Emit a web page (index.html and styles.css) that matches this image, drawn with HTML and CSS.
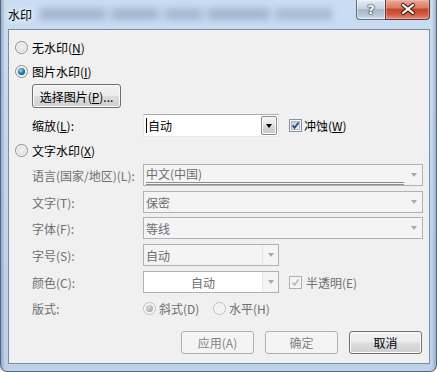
FILE: index.html
```html
<!DOCTYPE html>
<html lang="zh-CN">
<head>
<meta charset="utf-8">
<title>水印</title>
<link rel="stylesheet" href="styles.css">
</head>
<body>
<div class="window">
  <div class="titlebar">
    <span class="title">水印</span>
    <div class="ghost"></div>
    <div class="caption">
      <div class="cap-help">?</div>
      <div class="cap-close">
        <svg width="44" height="19" viewBox="0 0 44 19">
          <path d="M17 5 L27 13 M27 5 L17 13" stroke="#4a2019" stroke-width="4.2" stroke-linecap="round" fill="none"/>
          <path d="M17 5 L27 13 M27 5 L17 13" stroke="#ffffff" stroke-width="2.2" stroke-linecap="round" fill="none"/>
        </svg>
      </div>
    </div>
  </div>
  <div class="client">
    <div class="row opt r1"><span class="radio"></span><span class="txt">无水印(<u>N</u>)</span></div>
    <div class="row opt r2"><span class="radio on"></span><span class="txt">图片水印(<u>I</u>)</span></div>
    <div class="row r3"><div class="btn pick">选择图片(<u>P</u>)...</div></div>
    <div class="row field r4">
      <span class="lbl">缩放(<u>L</u>):</span>
      <div class="combo small edit">
        <span class="val"><i class="caret"></i>自动</span>
        <span class="dd"><span class="ddbtn"><i class="tri"></i></span></span>
      </div>
      <span class="chk">
        <svg width="13" height="13" viewBox="0 0 13 13">
          <defs><linearGradient id="cg1" x1="0" y1="0" x2="1" y2="1"><stop offset="0" stop-color="#b9c8dc"/><stop offset="1" stop-color="#f2f6fb"/></linearGradient></defs>
          <rect x="0.5" y="0.5" width="12" height="12" fill="#f6f6f6" stroke="#8e8f8f"/>
          <rect x="2.5" y="2.5" width="8" height="8" fill="url(#cg1)" stroke="#a9b8cc"/>
          <path d="M3.6 6.4 L5.6 8.8 L9.6 3.4" fill="none" stroke="#2f4482" stroke-width="1.7"/>
        </svg>
      </span>
      <span class="chktxt">冲蚀(<u>W</u>)</span>
    </div>
    <div class="row opt r5"><span class="radio"></span><span class="txt">文字水印(<u>X</u>)</span></div>
    <div class="row field r6">
      <span class="lbl dis">语言(国家/地区)(L):</span>
      <div class="combo wide dim">
        <span class="val"><span class="under">中文(中国)</span></span>
        <span class="dd"><i class="tri g"></i></span>
      </div>
    </div>
    <div class="row field r7">
      <span class="lbl dis">文字(T):</span>
      <div class="combo wide dim">
        <span class="val">保密</span>
        <span class="dd"><i class="tri g"></i></span>
      </div>
    </div>
    <div class="row field r8">
      <span class="lbl dis">字体(F):</span>
      <div class="combo wide dim">
        <span class="val">等线</span>
        <span class="dd"><i class="tri g"></i></span>
      </div>
    </div>
    <div class="row field r9">
      <span class="lbl dis">字号(S):</span>
      <div class="combo small dim">
        <span class="val">自动</span>
        <span class="dd sep"><i class="tri g"></i></span>
      </div>
    </div>
    <div class="row field r10">
      <span class="lbl dis">颜色(C):</span>
      <div class="combo small dim white">
        <span class="val center">自动</span>
        <span class="dd sep"><i class="tri g"></i></span>
      </div>
      <span class="chk semi">
        <svg width="13" height="13" viewBox="0 0 13 13">
          <rect x="0.5" y="0.5" width="12" height="12" fill="#f4f4f4" stroke="#b1b1b1"/>
          <path d="M3.6 6.6 L5.6 9 L9.6 3.4" fill="none" stroke="#b4b4b4" stroke-width="1.5"/>
        </svg>
      </span>
      <span class="chktxt dis">半透明(E)</span>
    </div>
    <div class="row field r11">
      <span class="lbl dis">版式:</span>
      <span class="radio dison"></span><span class="rtxt dis w1">斜式(D)</span>
      <span class="radio disoff"></span><span class="rtxt dis">水平(H)</span>
    </div>
    <div class="row actions">
      <div class="btn act off">应用(A)</div>
      <div class="btn act off">确定</div>
      <div class="btn act">取消</div>
    </div>
  </div>
</div>
</body>
</html>
```

FILE: styles.css
```css
* { box-sizing: border-box; }
html, body { margin: 0; padding: 0; }
body {
  width: 437px;
  height: 372px;
  overflow: hidden;
  font-family: "Noto Sans CJK SC", "Microsoft YaHei", sans-serif;
  font-size: 12px;
  color: #000;
  background: #fff;
}
u { text-decoration: underline; text-underline-offset: 1px; }

.window {
  width: 437px;
  height: 372px;
  display: flex;
  flex-direction: column;
  border: 1px solid #56677c;
  border-top: 0;
  border-radius: 0 0 7px 7px;
  background:
    linear-gradient(90deg, rgba(60,90,130,.35) 0, rgba(60,90,130,0) 4px, rgba(60,90,130,0) calc(100% - 4px), rgba(60,90,130,.3) 100%),
    linear-gradient(180deg, #c9dcf1 0, #c3d7ee 40%, #bcd2eb 100%);
}

.titlebar {
  height: 29px;
  display: flex;
  align-items: flex-start;
  flex: none;
}
.title {
  margin: 6px 0 0 7px;
  line-height: 17px;
  color: #000;
  text-shadow: 0 0 6px #fff, 0 0 10px #fff;
}
.ghost {
  width: 292px;
  height: 12px;
  margin: 8px 0 0 8px;
  background: linear-gradient(90deg,
    rgba(80,100,130,.30) 0 22%, rgba(80,100,130,.12) 22% 25%,
    rgba(80,100,130,.30) 25% 40%, rgba(80,100,130,.10) 40% 43%,
    rgba(80,100,130,.28) 43% 55%, rgba(80,100,130,.10) 55% 58%,
    rgba(80,100,130,.30) 58% 78%, rgba(80,100,130,.10) 78% 81%,
    rgba(80,100,130,.26) 81% 100%);
  filter: blur(3px);
}
.caption {
  margin-left: auto;
  margin-right: 6px;
  display: flex;
}
.cap-help {
  width: 29px;
  height: 20px;
  border: 1px solid #5f6f84;
  border-top: 0;
  border-right: 0;
  border-radius: 0 0 0 4px;
  background: linear-gradient(180deg, #e3ebf3 0, #c7d3e0 45%, #a9b8ca 50%, #b9c7d6 80%, #d5e0ea 100%);
  box-shadow: inset 0 0 0 1px rgba(255,255,255,.45);
  color: #fff;
  font-family: "DejaVu Sans", sans-serif;
  font-weight: bold;
  font-size: 13px;
  line-height: 19px;
  text-align: center;
  text-shadow: 0 0 1px #2b3440, 0 0 1px #2b3440, 0 0 2px #2b3440;
}
.cap-close {
  width: 45px;
  height: 20px;
  border: 1px solid #5f3a34;
  border-top: 0;
  border-radius: 0 0 4px 0;
  background: linear-gradient(180deg, #e9aa9a 0, #da7d68 40%, #c7452d 50%, #cf5a42 75%, #e3917d 100%);
  box-shadow: inset 0 0 0 1px rgba(255,210,200,.35);
}
.cap-close svg { display: block; }

.client {
  width: 422px;
  height: 335px;
  margin: 0 0 7px 7px;
  border: 1px solid #7b8ea6;
  background: #f0f0f0;
  display: flex;
  flex-direction: column;
  padding-right: 7px;
  flex: none;
}

.row { display: flex; align-items: center; flex: none; }
.opt { height: 17px; padding-left: 6px; }
.opt .txt { margin-left: 4px; line-height: 17px; }
.field { padding-left: 23px; }
.lbl { width: 111px; flex: none; line-height: 17px; }
.dis { color: #6f6f6f; }

.r1 { margin-top: 9px; }
.r2 { margin-top: 7px; }
.r3 { margin-top: 4px; padding-left: 23px; height: 24px; }
.r4 { margin-top: 6px; height: 23px; }
.r5 { margin-top: 5px; }
.r6 { margin-top: 5px; height: 22px; }
.r7 { margin-top: 5px; height: 22px; }
.r8 { margin-top: 4px; height: 22px; }
.r9 { margin-top: 5px; height: 22px; }
.r10 { margin-top: 5px; height: 22px; }
.r11 { margin-top: 7px; height: 17px; }
.actions { margin-top: 14px; height: 23px; justify-content: flex-end; gap: 11px; }

/* radios */
.radio {
  width: 13px;
  height: 13px;
  flex: none;
  border-radius: 50%;
  border: 1px solid #8f8f8f;
  background: radial-gradient(circle at 50% 45%, #f4f4f4 0, #e2e2e2 55%, #d0d0d0 100%);
  box-shadow: inset 0 0 0 1px #fbfbfb;
  position: relative;
}
.radio.on::after,
.radio.dison::after {
  content: "";
  position: absolute;
  left: 2px;
  top: 2px;
  width: 7px;
  height: 7px;
  border-radius: 50%;
  background: radial-gradient(circle at 40% 35%, #a9dcf5 0, #3a93c4 35%, #175582 75%, #123f63 100%);
}
.radio.dison, .radio.disoff {
  border-color: #bcbcbc;
  background: radial-gradient(circle, #f6f6f6 0, #ececec 100%);
}
.radio.dison::after {
  background: radial-gradient(circle at 40% 35%, #e0e0e0 0, #b2b2b2 60%, #9a9a9a 100%);
}
.rtxt { margin-left: 3px; line-height: 17px; }
.w1 { width: 54px; }

/* buttons */
.btn {
  display: flex;
  align-items: center;
  justify-content: center;
  border: 1px solid #707070;
  border-radius: 3px;
  background: linear-gradient(180deg, #f2f2f2 0, #ebebeb 48%, #dddddd 52%, #cfcfcf 100%);
  box-shadow: inset 0 0 0 1px #fbfbfb;
  line-height: 17px;
}
.pick { width: 89px; height: 24px; }
.act { width: 73px; height: 23px; }
.act.off {
  border-color: #adb2b5;
  background: #f4f4f4;
  box-shadow: none;
  color: #838383;
}

/* combos */
.combo {
  display: flex;
  height: 22px;
  border: 1px solid #abadb3;
  background: #fff;
  flex: none;
}
.combo.small { width: 136px; }
.combo.wide { width: 280px; }
.combo.edit { height: 23px; border-color: #abadb3 #e2e3ea #e3e9ef #e2e3ea; border-top-color: #abadb3; }
.combo.dim { border-color: #adb2b5; background: #f4f4f4; color: #6d6d6d; }
.combo.white { background: #fff; }
.val {
  flex: 1;
  display: flex;
  align-items: center;
  padding-left: 2px;
  line-height: 17px;
  overflow: hidden;
}
.val.center { justify-content: center; padding-left: 0; }
.caret { display: block; width: 1px; height: 15px; background: #000; margin-right: 1px; }
.under {
  display: block;
  flex: 1;
  height: 20px;
  margin: 0 2px 1px 0;
  line-height: 17px;
  border-bottom: 3px double #8d8d8d;
}
.dd {
  width: 16px;
  flex: none;
  display: flex;
  align-items: center;
  justify-content: center;
}
.dd.sep { border-left: 1px solid #e6e6e6; background: #f4f4f4; }
.ddbtn {
  width: 16px;
  height: 19px;
  margin-right: 1px;
  display: flex;
  align-items: center;
  justify-content: center;
  border: 1px solid #8a8a8a;
  border-radius: 2px;
  background: linear-gradient(180deg, #f3f3f3 0, #e6e6e6 48%, #d6d6d6 52%, #c9c9c9 100%);
  box-shadow: inset 0 0 0 1px #fafafa;
}
.edit .dd { width: 17px; }
.tri {
  display: block;
  width: 0;
  height: 0;
  border-left: 3.5px solid transparent;
  border-right: 3.5px solid transparent;
  border-top: 4px solid #000;
}
.tri.g { border-top-color: #a9a9a9; }

/* checkboxes */
.chk { width: 13px; height: 13px; flex: none; margin-left: 10px; }
.chk svg { display: block; }
.chk.semi { margin-left: 10px; }
.chktxt { margin-left: 2px; line-height: 17px; }
.chktxt.dis { margin-left: 4px; }
```
